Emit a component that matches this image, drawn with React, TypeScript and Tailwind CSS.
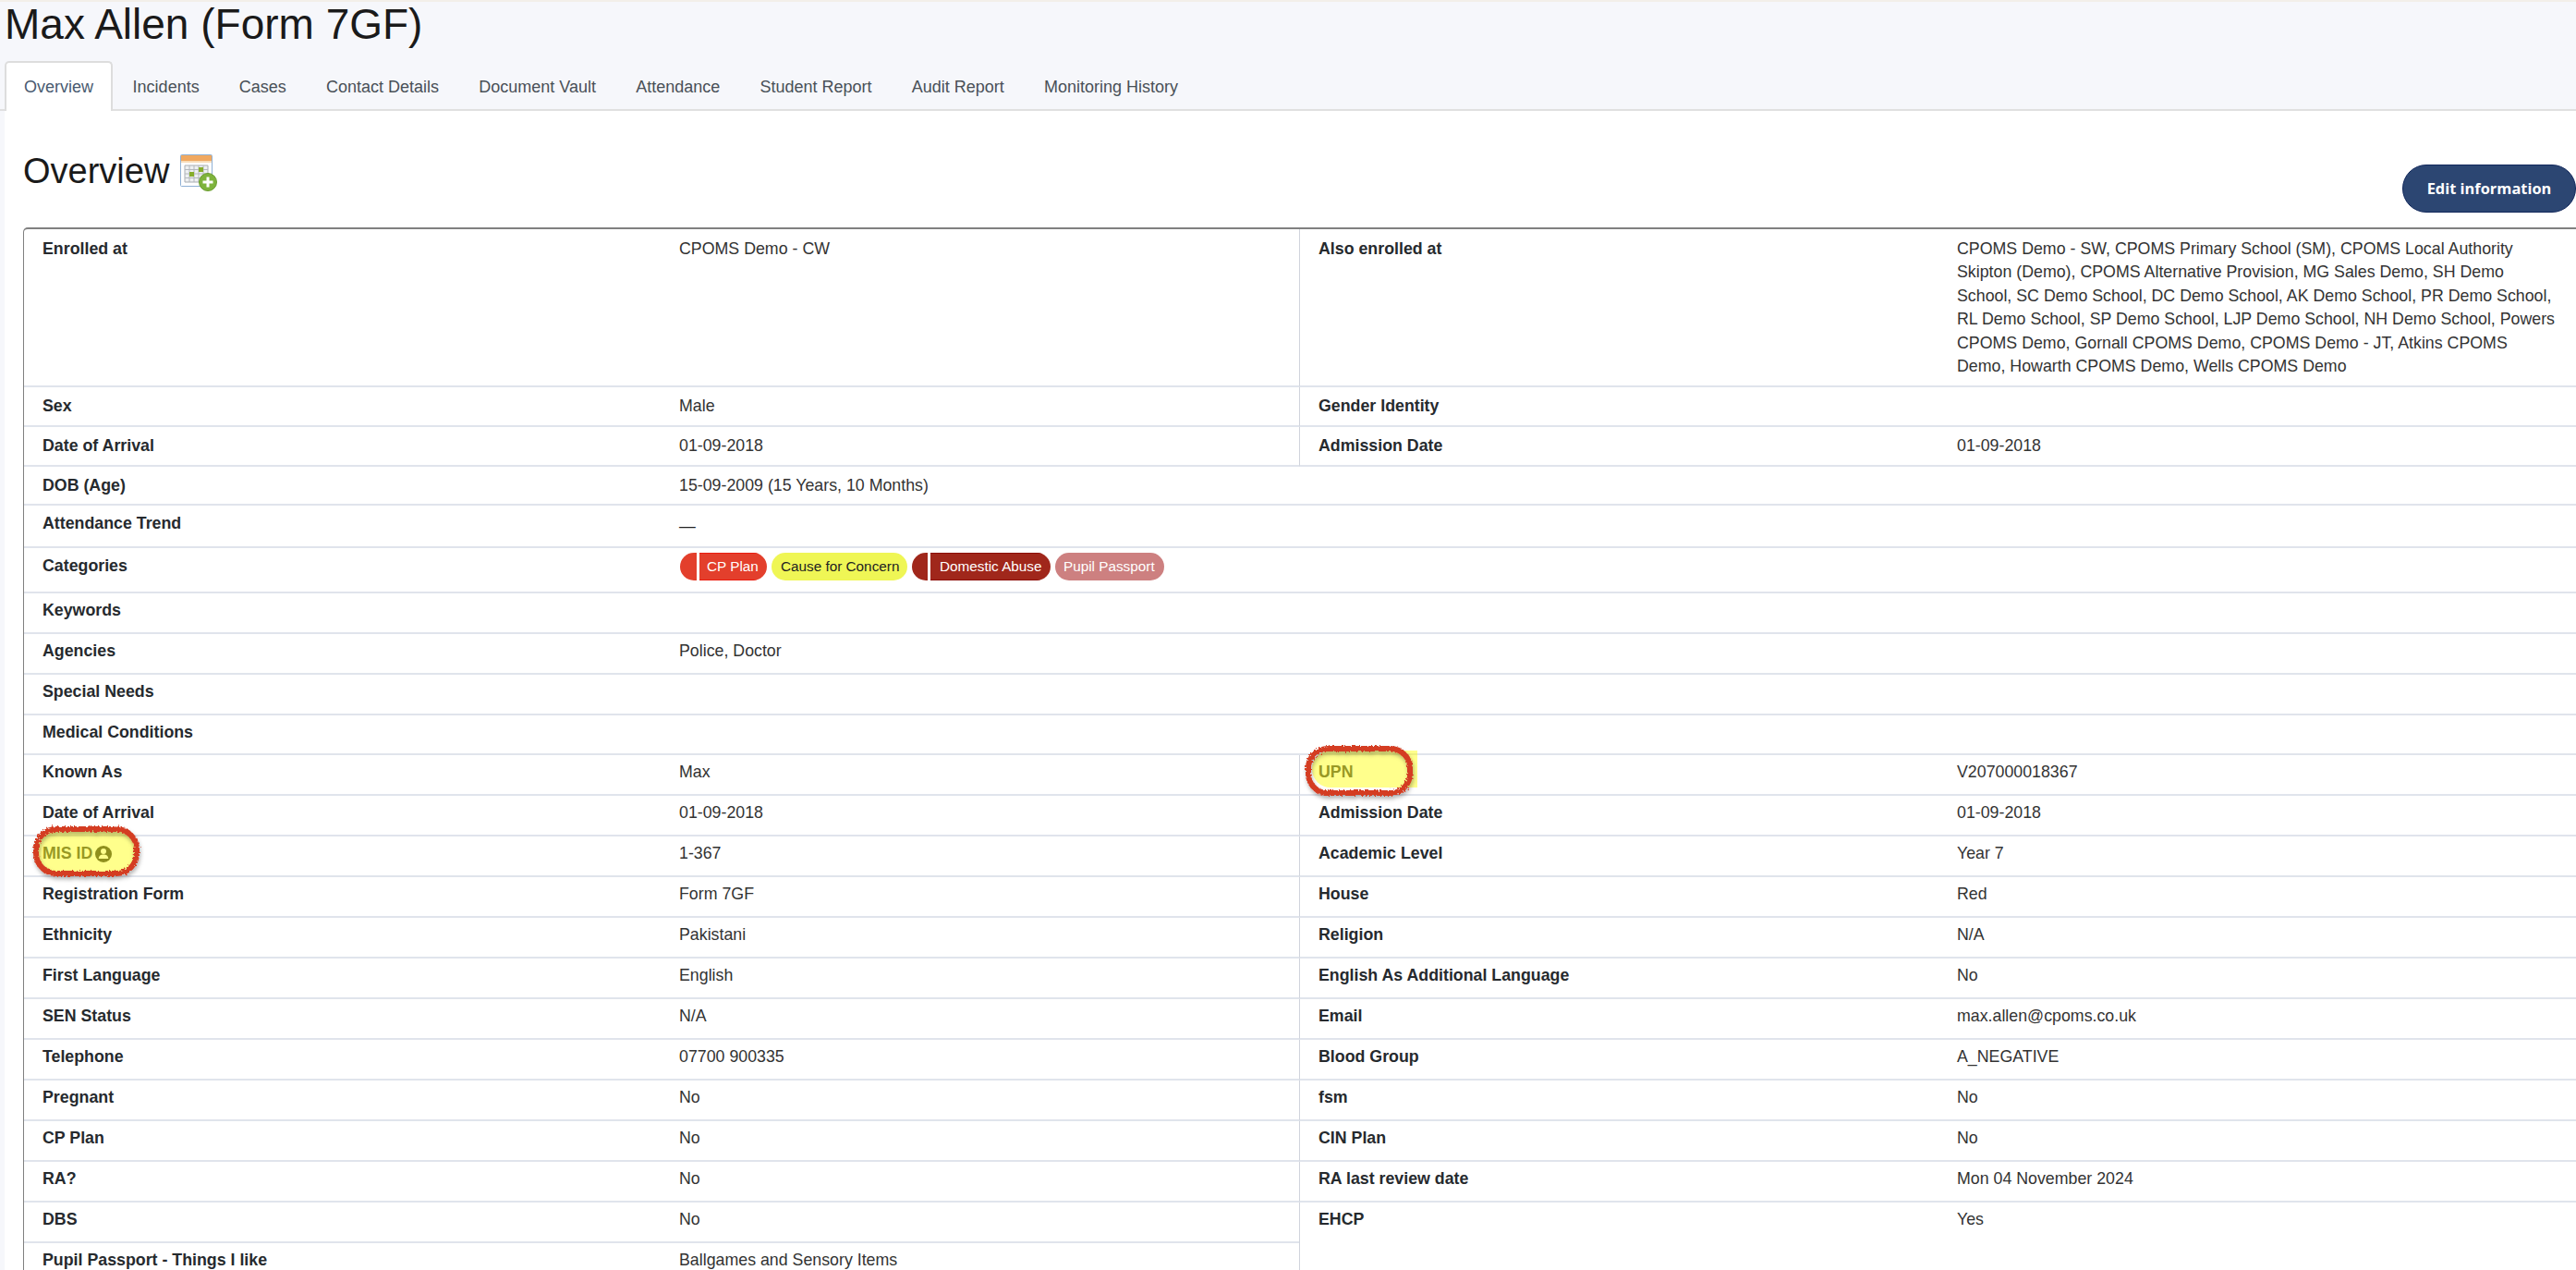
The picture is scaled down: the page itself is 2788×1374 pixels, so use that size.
const tabs = [
  "Overview",
  "Incidents",
  "Cases",
  "Contact Details",
  "Document Vault",
  "Attendance",
  "Student Report",
  "Audit Report",
  "Monitoring History",
];

const alsoEnrolled =
  "CPOMS Demo - SW, CPOMS Primary School (SM), CPOMS Local Authority Skipton (Demo), CPOMS Alternative Provision, MG Sales Demo, SH Demo School, SC Demo School, DC Demo School, AK Demo School, PR Demo School, RL Demo School, SP Demo School, LJP Demo School, NH Demo School, Powers CPOMS Demo, Gornall CPOMS Demo, CPOMS Demo - JT, Atkins CPOMS Demo, Howarth CPOMS Demo, Wells CPOMS Demo";

type Row = {
  size: string;
  label: React.ReactNode;
  value?: React.ReactNode;
  rightLabel?: React.ReactNode;
  rightValue?: string;
  wide?: boolean;
  last?: boolean;
};

const rows: Row[] = [
  { size: "h-[171px] pt-[9px]", label: "Enrolled at", value: "CPOMS Demo - CW", rightLabel: "Also enrolled at", rightValue: alsoEnrolled },
  { size: "h-[43px] pt-[8px]", label: "Sex", value: "Male", rightLabel: "Gender Identity" },
  { size: "h-[43px] pt-[8px]", label: "Date of Arrival", value: "01-09-2018", rightLabel: "Admission Date", rightValue: "01-09-2018" },
  { size: "h-[42px] pt-[8px]", label: "DOB (Age)", value: "15-09-2009 (15 Years, 10 Months)", wide: true },
  { size: "h-[46px] pt-[7px]", label: "Attendance Trend", value: <span className="relative top-[3px] text-[#222222]">—</span>, wide: true },
  { size: "h-[49px] pt-[7px]", label: "Categories", value: <Pills />, wide: true },
  { size: "h-[44px] pt-[6px]", label: "Keywords", wide: true },
  { size: "h-[44px] pt-[6px]", label: "Agencies", value: "Police, Doctor", wide: true },
  { size: "h-[44px] pt-[6px]", label: "Special Needs", wide: true },
  { size: "h-[43px] pt-[6px]", label: "Medical Conditions", wide: true },
  { size: "h-[44px] pt-[6px]", label: "Known As", value: "Max", rightLabel: <span className="text-[#444444]">UPN</span>, rightValue: "V207000018367" },
  { size: "h-[44px] pt-[6px]", label: "Date of Arrival", value: "01-09-2018", rightLabel: "Admission Date", rightValue: "01-09-2018" },
  { size: "h-[44px] pt-[6px]", label: <MisId />, value: "1-367", rightLabel: "Academic Level", rightValue: "Year 7" },
  { size: "h-[44px] pt-[6px]", label: "Registration Form", value: "Form 7GF", rightLabel: "House", rightValue: "Red" },
  { size: "h-[44px] pt-[6px]", label: "Ethnicity", value: "Pakistani", rightLabel: "Religion", rightValue: "N/A" },
  { size: "h-[44px] pt-[6px]", label: "First Language", value: "English", rightLabel: "English As Additional Language", rightValue: "No" },
  { size: "h-[44px] pt-[6px]", label: "SEN Status", value: "N/A", rightLabel: "Email", rightValue: "max.allen@cpoms.co.uk" },
  { size: "h-[44px] pt-[6px]", label: "Telephone", value: "07700 900335", rightLabel: "Blood Group", rightValue: "A_NEGATIVE" },
  { size: "h-[44px] pt-[6px]", label: "Pregnant", value: "No", rightLabel: "fsm", rightValue: "No" },
  { size: "h-[44px] pt-[6px]", label: "CP Plan", value: "No", rightLabel: "CIN Plan", rightValue: "No" },
  { size: "h-[44px] pt-[6px]", label: "RA?", value: "No", rightLabel: "RA last review date", rightValue: "Mon 04 November 2024" },
  { size: "h-[44px] pt-[6px]", label: "DBS", value: "No", rightLabel: "EHCP", rightValue: "Yes", last: true },
];

function Pills() {
  return (
    <div className="-mt-[2px] ml-[1px] flex gap-[5px] whitespace-nowrap text-[15.3px] leading-[30px]">
      <div className="flex h-[30px] w-[94px] overflow-hidden rounded-full text-white">
        <span className="w-[18px] bg-[#e33f2c]" />
        <span className="w-[3px] bg-white" />
        <span className="flex-1 border-y border-[#ea1c10] bg-[#e33f2c] pl-[8px] leading-[28px]">CP Plan</span>
      </div>
      <div className="h-[30px] w-[147px] rounded-full bg-[#eff655] pl-[10px] text-[#222222]">Cause for Concern</div>
      <div className="flex h-[30px] w-[150px] overflow-hidden rounded-full text-white">
        <span className="w-[17px] bg-[#a0271b]" />
        <span className="w-[3px] bg-white" />
        <span className="flex-1 border-y border-[#8c0f0a] bg-[#a0271b] pl-[10px] leading-[28px]">Domestic Abuse</span>
      </div>
      <div className="h-[30px] w-[118px] rounded-full bg-[#cd8080] pl-[9px] text-white">Pupil Passport</div>
    </div>
  );
}

function MisId() {
  return (
    <span className="flex items-center gap-[3px] text-[#444444]">
      MIS ID
      <svg viewBox="0 0 18 18" className="h-[18px] w-[18px]">
        <circle cx="9" cy="9" r="9" fill="#333333" />
        <circle cx="9" cy="6" r="3" fill="#ffffff" />
        <path d="M3.8 14c0-3.2 2.200-4.600 5.200-4.600s5.200 1.400 5.200 4.600z" fill="#ffffff" />
      </svg>
    </span>
  );
}

function CalendarIcon() {
  return (
    <svg viewBox="0 0 40 40" className="h-[40px] w-[40px]">
      <rect x="0.5" y="0.5" width="34" height="34" rx="1" fill="#ffffff" stroke="#8fb0d4" />
      <rect x="1" y="1" width="33" height="6" fill="#f0a860" />
      <rect x="1" y="7" width="33" height="2" fill="#f8dcb8" />
      <path d="M5 12h25v18H5z" fill="#eef0f2" stroke="#a8adb2" />
      <path d="M10 12v18M15 12v18M20 12v18M25 12v18M5 16.500h25M5 21h25M5 25.500h25" stroke="#b4b8bc" strokeWidth="1" fill="none" />
      <rect x="10" y="19" width="5" height="5" fill="#86ad2c" />
      <rect x="20" y="14" width="5" height="5" fill="#86ad2c" />
      <circle cx="30" cy="30" r="9.500" fill="#7eb33c" stroke="#6a9c30" />
      <path d="M30 24.500v11M24.500 30h11" stroke="#ffffff" strokeWidth="3" />
    </svg>
  );
}

function Markup() {
  return (
    <svg viewBox="0 0 2788 1374" className="pointer-events-none absolute inset-0 h-[1374px] w-[2788px]">
      <defs>
        <filter id="rough" x="-10%" y="-20%" width="120%" height="140%">
          <feTurbulence type="fractalNoise" baseFrequency="0.5" numOctaves="2" seed="4" />
          <feDisplacementMap in="SourceGraphic" scale="6" />
        </filter>
        <filter id="soft" x="-10%" y="-20%" width="120%" height="150%">
          <feDropShadow dx="1" dy="3" stdDeviation="2" floodColor="#000000" floodOpacity="0.3" />
        </filter>
      </defs>
      <path d="M1440 812H1534V852H1440a20 20 0 0 1 0-40z" fill="#ffff00" fillOpacity="0.45" />
      <rect x="40" y="898" width="107" height="46" rx="22" fill="#ffff00" fillOpacity="0.45" />
      <g filter="url(#soft)">
        <rect x="1416" y="810" width="110" height="48" rx="21" fill="none" stroke="#d43c22" strokeWidth="6" filter="url(#rough)" />
        <rect x="39" y="897" width="109" height="48" rx="22" fill="none" stroke="#d43c22" strokeWidth="6" filter="url(#rough)" />
      </g>
    </svg>
  );
}

export default function App() {
  return (
    <div className="relative h-[1374px] w-[2788px] overflow-hidden bg-[#f6f7fb] font-['Liberation_Sans',Arial,sans-serif] text-[17.8px] leading-[25.4px] text-[#262a2e]">
      <header className="border-t-2 border-[#f3efe9]">
        <h1 className="-mt-[1px] h-[65px] pl-[5px] text-[46px] leading-[50px] text-[#1a1a1a]">Max Allen (Form 7GF)</h1>
        <nav className="flex h-[54px] border-b-2 border-[#e0e0e0] pl-[5px] text-[18px]">
          {tabs.map((tab, i) => (
            <a
              key={tab}
              className={
                i === 0
                  ? "-mb-[2px] rounded-t-[5px] border-2 border-b-0 border-[#dddddd] bg-white px-[19px] pt-[14px] text-[#495a70]"
                  : "px-[21.6px] pt-[16px] text-[#495057]"
              }
            >
              {tab}
            </a>
          ))}
        </nav>
      </header>
      <main className="ml-[5px] h-[1254px] bg-white pl-[20px]">
        <div className="flex h-[126px] justify-between">
          <div className="flex items-start gap-[12px] pt-[43px] text-[38px] leading-[44px] text-[#1a1a1a]">
            Overview
            <span className="mt-[4px]">
              <CalendarIcon />
            </span>
          </div>
          <button className="mt-[58px] h-[52px] w-[188px] rounded-l-[26px] rounded-r-[26px] border border-[#12285c] bg-[#2c4672] font-['Open_Sans',sans-serif] text-[16.4px] font-bold text-white">
            Edit information
          </button>
        </div>
        <div className="rounded-tl-[5px] border-t-2 border-l border-[#808080]">
          {rows.map((row, i) => (
            <div key={i} className="flex">
              <div className={`${row.size} flex w-[1380px] border-b-2 border-[#e0e4ec] pl-[20px]`}>
                <div className="w-[689px] font-bold">{row.label}</div>
                <div className="flex-1 text-[#333333]">{row.value}</div>
              </div>
              <div
                className={
                  row.wide
                    ? `${row.size} flex flex-1 border-b-2 border-[#e0e4ec]`
                    : row.last
                      ? `${row.size} flex flex-1 border-l border-[#d0d4dc] pl-[20px]`
                      : `${row.size} flex flex-1 border-b-2 border-l border-b-[#e0e4ec] border-l-[#d0d4dc] pl-[20px]`
                }
              >
                <div className="w-[691px] font-bold">{row.rightLabel}</div>
                <div className="w-[647px] text-[#333333]">{row.rightValue}</div>
              </div>
            </div>
          ))}
          <div className="flex">
            <div className="flex w-[1380px] pl-[20px] pt-[6px]">
              <div className="w-[689px] font-bold">Pupil Passport - Things I like</div>
              <div className="text-[#333333]">Ballgames and Sensory Items</div>
            </div>
            <div className="h-[40px] border-l border-[#d0d4dc]" />
          </div>
        </div>
      </main>
      <Markup />
    </div>
  );
}
